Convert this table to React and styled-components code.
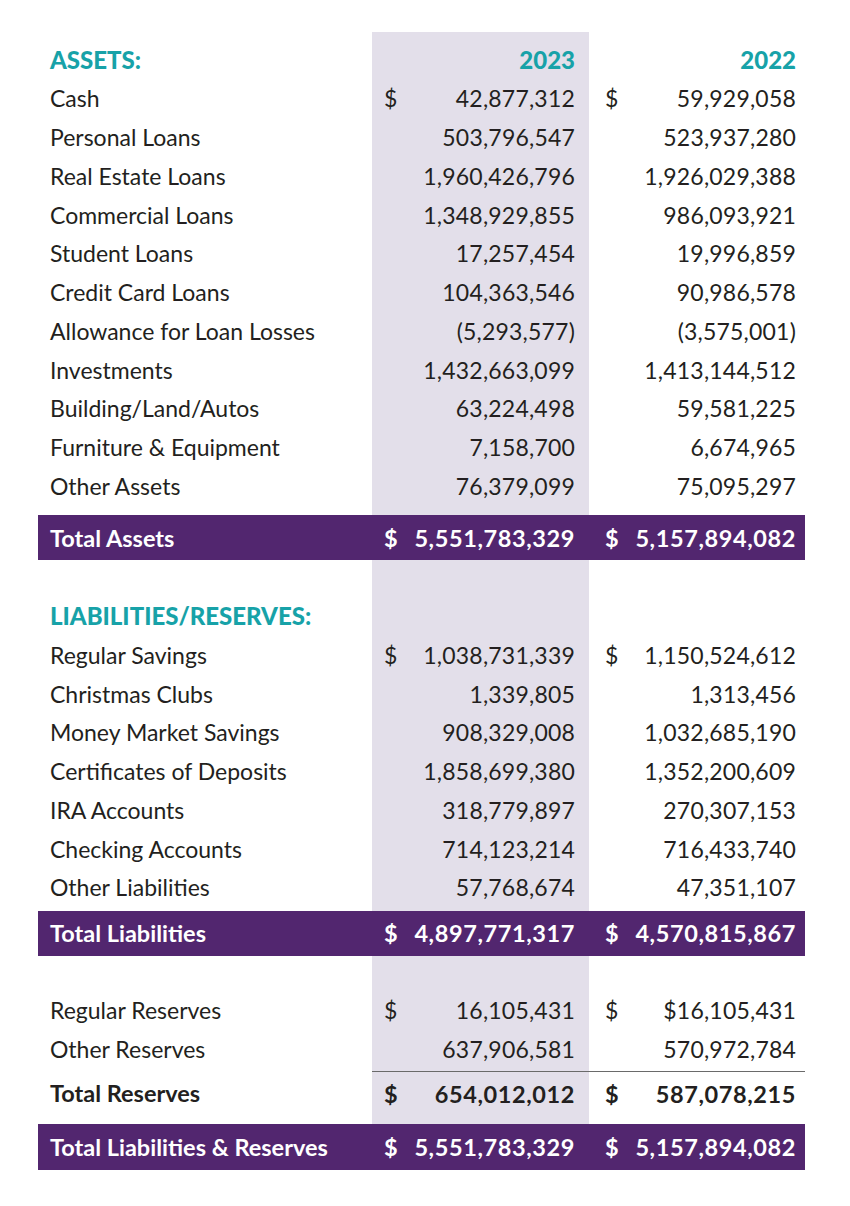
import React from "react";
import styled, { createGlobalStyle } from "styled-components";

const GlobalStyle = createGlobalStyle`
  html, body {
    margin: 0;
    padding: 0;
    background: #ffffff;
  }
  body {
    font-family: Lato, "Open Sans", "Liberation Sans", sans-serif;
    color: #231f20;
  }
`;

const SHADE = "#e3dfea";
const PURPLE = "#52266f";
const TEAL = "#17a2a8";

const assets = [
  ["Cash", "42,877,312", "59,929,058", true],
  ["Personal Loans", "503,796,547", "523,937,280"],
  ["Real Estate Loans", "1,960,426,796", "1,926,029,388"],
  ["Commercial Loans", "1,348,929,855", "986,093,921"],
  ["Student Loans", "17,257,454", "19,996,859"],
  ["Credit Card Loans", "104,363,546", "90,986,578"],
  ["Allowance for Loan Losses", "(5,293,577)", "(3,575,001)"],
  ["Investments", "1,432,663,099", "1,413,144,512"],
  ["Building/Land/Autos", "63,224,498", "59,581,225"],
  ["Furniture & Equipment", "7,158,700", "6,674,965"],
  ["Other Assets", "76,379,099", "75,095,297"],
];

const liabilities = [
  ["Regular Savings", "1,038,731,339", "1,150,524,612", true],
  ["Christmas Clubs", "1,339,805", "1,313,456"],
  ["Money Market Savings", "908,329,008", "1,032,685,190"],
  ["Certificates of Deposits", "1,858,699,380", "1,352,200,609"],
  ["IRA Accounts", "318,779,897", "270,307,153"],
  ["Checking Accounts", "714,123,214", "716,433,740"],
  ["Other Liabilities", "57,768,674", "47,351,107"],
];

const reserves = [
  ["Regular Reserves", "16,105,431", "$16,105,431", true],
  ["Other Reserves", "637,906,581", "570,972,784"],
];

const Sheet = styled.div`
  width: 767px;
  margin: 32px 0 0 38px;
  display: flex;
  flex-direction: column;
`;

const Row = styled.div`
  display: grid;
  grid-template-columns: 334px 217px 216px;
  height: ${(p) => p.$h}px;
  background: ${(p) => (p.$bar ? PURPLE : "transparent")};
  color: ${(p) => (p.$bar ? "#ffffff" : "inherit")};
  font-size: ${(p) => (p.$bold ? 23.5 : 23)}px;
  font-weight: ${(p) => (p.$bold ? 700 : 400)};
`;

const Label = styled.div`
  display: flex;
  align-items: center;
  padding-left: 12px;
  padding-bottom: ${(p) => p.$pb || 0}px;
  white-space: nowrap;
`;

const Heading = styled(Label)`
  color: ${TEAL};
  font-size: 24px;
  font-weight: 900;
`;

const Amount = styled.div`
  display: flex;
  align-items: center;
  justify-content: space-between;
  padding: 0 ${(p) => (p.$alt ? 9 : 14)}px ${(p) => p.$pb || 0}px
    ${(p) => (p.$alt ? 16 : 12)}px;
  background: ${(p) => (p.$shade ? SHADE : "transparent")};
  border-top: ${(p) => (p.$rule ? "1px solid #6a6a6a" : "none")};
  white-space: nowrap;
`;

const Year = styled.span`
  margin-left: auto;
  color: ${TEAL};
  font-size: 24px;
  font-weight: 900;
`;

const Dollar = styled.span``;
const Figure = styled.span`
  margin-left: auto;
  letter-spacing: ${(p) => (p.$wide ? 0.6 : 0.2)}px;
`;

const Spacer = ({ h }) => (
  <Row $h={h}>
    <div />
    <Amount $shade />
    <Amount $alt />
  </Row>
);

const Head = ({ title, years }) => (
  <Row $h={40}>
    <Heading>{title}</Heading>
    <Amount $shade>{years && <Year>2023</Year>}</Amount>
    <Amount $alt>{years && <Year>2022</Year>}</Amount>
  </Row>
);

const Item = ({ label, a, b, sign }) => (
  <Row $h={38.75}>
    <Label>{label}</Label>
    <Amount $shade>
      {sign && <Dollar>$</Dollar>}
      <Figure>{a}</Figure>
    </Amount>
    <Amount $alt>
      {sign && <Dollar>$</Dollar>}
      <Figure>{b}</Figure>
    </Amount>
  </Row>
);

const Total = ({ label, a, b, h = 45 }) => (
  <Row $h={h} $bar $bold>
    <Label>{label}</Label>
    <Amount>
      <Dollar>$</Dollar>
      <Figure $wide>{a}</Figure>
    </Amount>
    <Amount $alt>
      <Dollar>$</Dollar>
      <Figure $wide>{b}</Figure>
    </Amount>
  </Row>
);

const Items = ({ rows }) =>
  rows.map(([label, a, b, sign]) => (
    <Item key={label} label={label} a={a} b={b} sign={sign} />
  ));

export default function App() {
  return (
    <>
      <GlobalStyle />
      <Sheet>
        <Spacer h={7} />
        <Head title="ASSETS:" years />
        <Items rows={assets} />
        <Spacer h={10.2} />
        <Total label="Total Assets" a="5,551,783,329" b="5,157,894,082" />
        <Spacer h={35} />
        <Head title="LIABILITIES/RESERVES:" />
        <Items rows={liabilities} />
        <Spacer h={4.3} />
        <Total label="Total Liabilities" a="4,897,771,317" b="4,570,815,867" />
        <Spacer h={34.6} />
        <Items rows={reserves} />
        <Spacer h={3} />
        <Row $h={52.8} $bold>
          <Label $pb={8}>Total Reserves</Label>
          <Amount $shade $rule $pb={8}>
            <Dollar>$</Dollar>
            <Figure $wide>654,012,012</Figure>
          </Amount>
          <Amount $alt $rule $pb={8}>
            <Dollar>$</Dollar>
            <Figure $wide>587,078,215</Figure>
          </Amount>
        </Row>
        <Total
          label="Total Liabilities & Reserves"
          a="5,551,783,329"
          b="5,157,894,082"
          h={46}
        />
      </Sheet>
    </>
  );
}
